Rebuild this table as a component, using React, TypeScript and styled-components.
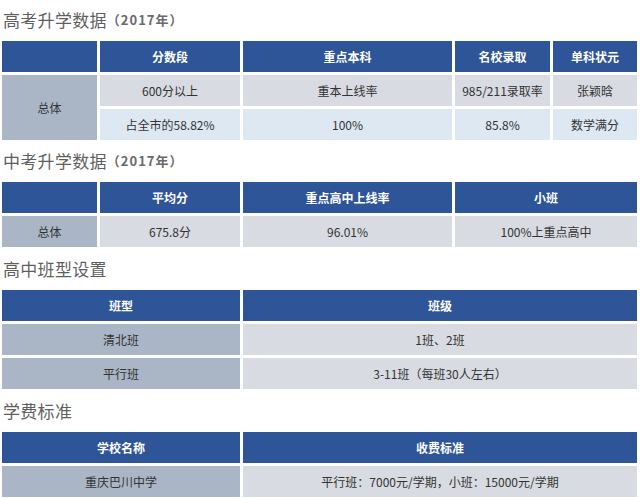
import React from 'react'
import styled, { createGlobalStyle } from 'styled-components'

const GlobalStyle = createGlobalStyle`
  html, body {
    margin: 0;
    padding: 0;
    background: #fff;
  }
  body {
    font-family: 'Noto Sans CJK SC', 'Noto Sans', sans-serif;
  }
`

type Tone = 'label' | 'gray' | 'blue'

const toneColors: Record<Tone, string> = {
  label: '#aab6c6',
  gray: '#d8dbe1',
  blue: '#dde8f3',
}

const Page = styled.div`
  width: 640px;
  padding: 0 3px 0 2px;
  box-sizing: border-box;
  display: flex;
  flex-direction: column;
`

const Title = styled.div<{ $h: number }>`
  height: ${(p) => p.$h}px;
  box-sizing: border-box;
  display: flex;
  align-items: flex-end;
  padding: 0 0 11px 1px;
  font-size: 17px;
  line-height: 20px;
  color: #5f5f5f;
  letter-spacing: 0.3px;
`

const Year = styled.span`
  font-size: 13px;
  font-weight: 700;
  color: #6a6a6a;
  letter-spacing: 1px;
`

const Grid = styled.div<{ $cols: string }>`
  display: grid;
  grid-template-columns: ${(p) => p.$cols};
  grid-auto-rows: 31px;
  gap: 3px;
`

const HeadCell = styled.div`
  background: #2e5597;
  color: #fff;
  font-size: 12px;
  font-weight: 700;
  display: flex;
  align-items: center;
  justify-content: center;
`

const Cell = styled.div<{ $tone: Tone; $rows?: number }>`
  background: ${(p) => toneColors[p.$tone]};
  grid-row: ${(p) => (p.$rows ? `span ${p.$rows}` : 'auto')};
  color: #333;
  font-size: 12px;
  display: flex;
  align-items: center;
  justify-content: center;
  white-space: nowrap;
`

export default function App() {
  return (
    <Page>
      <GlobalStyle />

      <Title $h={41}>
        高考升学数据<Year>（2017年）</Year>
      </Title>
      <Grid $cols="95px 140px 209px 95px 84px">
        <HeadCell />
        <HeadCell>分数段</HeadCell>
        <HeadCell>重点本科</HeadCell>
        <HeadCell>名校录取</HeadCell>
        <HeadCell>单科状元</HeadCell>
        <Cell $tone="label" $rows={2}>总体</Cell>
        <Cell $tone="gray">600分以上</Cell>
        <Cell $tone="gray">重本上线率</Cell>
        <Cell $tone="gray">985/211录取率</Cell>
        <Cell $tone="gray">张颖晗</Cell>
        <Cell $tone="blue">占全市的58.82%</Cell>
        <Cell $tone="blue">100%</Cell>
        <Cell $tone="blue">85.8%</Cell>
        <Cell $tone="blue">数学满分</Cell>
      </Grid>

      <Title $h={42}>
        中考升学数据<Year>（2017年）</Year>
      </Title>
      <Grid $cols="95px 140px 209px 182px">
        <HeadCell />
        <HeadCell>平均分</HeadCell>
        <HeadCell>重点高中上线率</HeadCell>
        <HeadCell>小班</HeadCell>
        <Cell $tone="label">总体</Cell>
        <Cell $tone="gray">675.8分</Cell>
        <Cell $tone="gray">96.01%</Cell>
        <Cell $tone="gray">100%上重点高中</Cell>
      </Grid>

      <Title $h={43}>高中班型设置</Title>
      <Grid $cols="238px 394px">
        <HeadCell>班型</HeadCell>
        <HeadCell>班级</HeadCell>
        <Cell $tone="label">清北班</Cell>
        <Cell $tone="gray">1班、2班</Cell>
        <Cell $tone="label">平行班</Cell>
        <Cell $tone="gray">3-11班（每班30人左右）</Cell>
      </Grid>

      <Title $h={43}>学费标准</Title>
      <Grid $cols="238px 394px">
        <HeadCell>学校名称</HeadCell>
        <HeadCell>收费标准</HeadCell>
        <Cell $tone="label">重庆巴川中学</Cell>
        <Cell $tone="gray">平行班：7000元/学期，小班：15000元/学期</Cell>
      </Grid>
    </Page>
  )
}
